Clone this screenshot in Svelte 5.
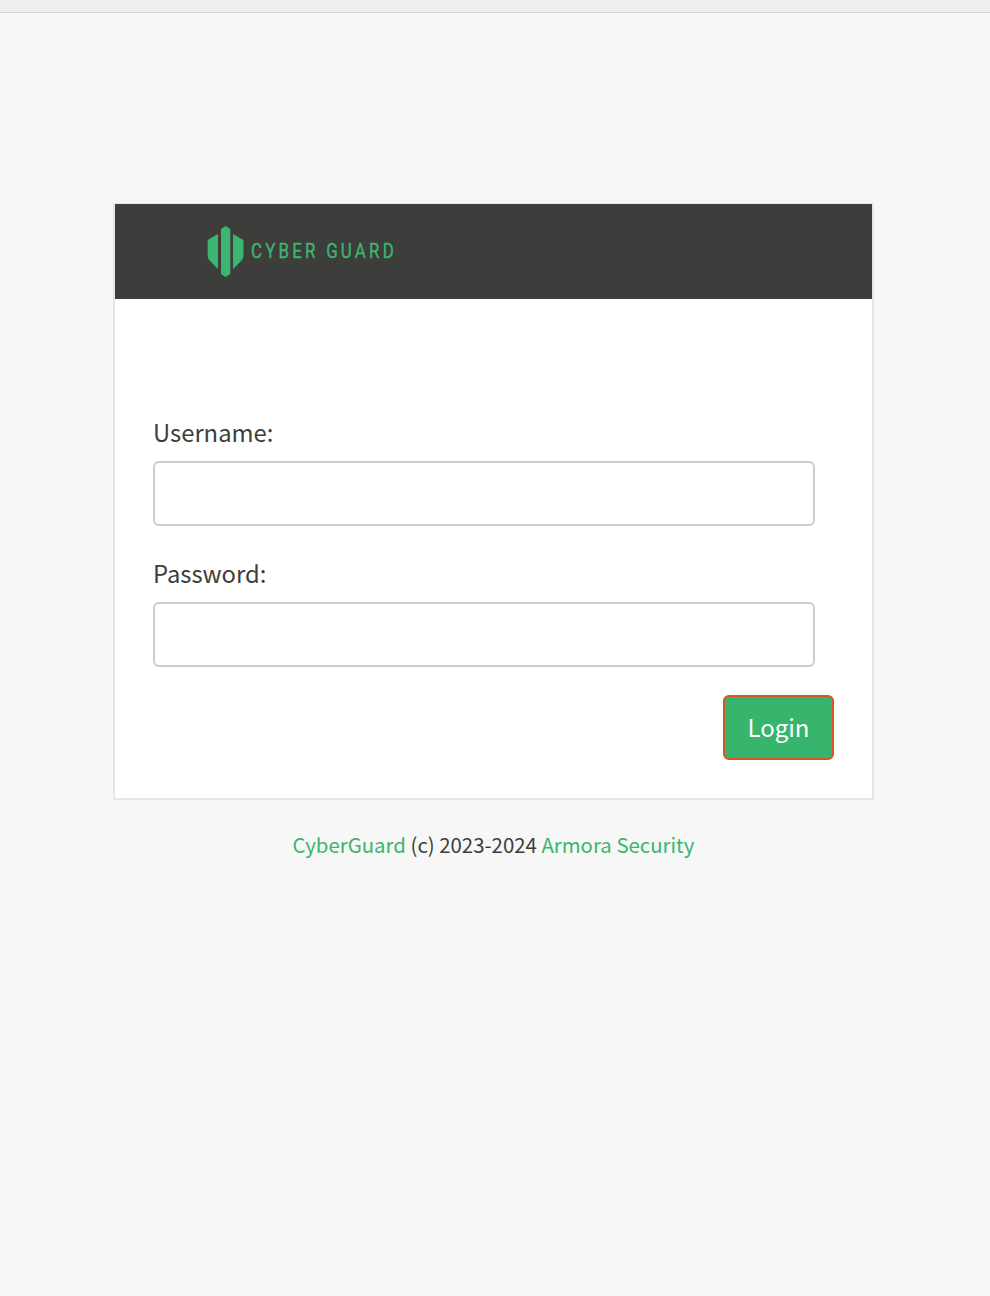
<script>
  let username = $state('')
  let password = $state('')
</script>

<div class="page">
  <div class="topbar"></div>
  <main class="wrap">
    <div class="card">
      <header class="head">
        <svg class="logo" width="280" height="54" viewBox="0 0 280 54" aria-label="Cyber Guard logo">
          <path d="M14 3 L17.700 0.500 Q18.500 0 19.400 0.500 L23.300 3 V48 L19.400 50.500 Q18.500 51 17.700 50.500 L14 48 Z" fill="#3cb56e" />
          <path d="M0.700 14 L11 8 V43 L4 36 Q0.700 33 0.700 30 Z" fill="#3cb56e" />
          <path d="M36.500 14 L26 8 V43 L33.200 36 Q36.500 33 36.500 30 Z" fill="#3cb56e" />
          <text class="logo-text" x="44" y="32" textLength="146" lengthAdjust="spacingAndGlyphs">CYBER GUARD</text>
        </svg>
      </header>
      <form class="form" onsubmit={(e) => e.preventDefault()}>
        <label class="field">
          <span>Username:</span>
          <input type="text" bind:value={username} />
        </label>
        <label class="field">
          <span>Password:</span>
          <input type="password" bind:value={password} />
        </label>
        <div class="actions">
          <button type="submit">Login</button>
        </div>
      </form>
    </div>
    <p class="foot">
      <a href="#cyberguard">CyberGuard</a> (c) 2023-2024 <a href="#armora">Armora Security</a>
    </p>
  </main>
</div>

<style>
  :global(body) {
    margin: 0;
    background: #f7f7f7;
  }
  .page {
    min-height: 1296px;
    box-sizing: border-box;
    border-left: 1px solid #fbfbfb;
    font-family: "Noto Sans CJK SC", "Noto Sans", sans-serif;
    color: #3d3d3b;
    font-size: 23.800px;
    line-height: 32px;
  }
  .topbar {
    height: 12px;
    margin-left: -1px;
    background: #eeeeee;
    border-bottom: 1px solid #d6d6d6;
  }
  .wrap {
    width: 761px;
    margin-left: 112px;
    padding-top: 190px;
  }
  .card {
    height: 597px;
    box-sizing: border-box;
    background: #fff;
    border: 2px solid #e6e6e6;
    border-top-width: 1px;
    display: flex;
    flex-direction: column;
  }
  .head {
    height: 95px;
    background: #3d3d3b;
    padding: 22px 0 0 92px;
    box-sizing: border-box;
  }
  .logo {
    display: block;
  }
  .logo-text {
    font-family: Roboto, "Liberation Sans", sans-serif;
    font-size: 21px;
    letter-spacing: 4px;
    fill: #3cb56e;
    stroke: #3cb56e;
    stroke-width: 0.4px;
  }
  .form {
    padding: 117px 38px 0 38px;
  }
  .field {
    display: block;
    margin-bottom: 31px;
  }
  .field span {
    display: block;
    margin-bottom: 13px;
    height: 32px;
  }
  input {
    display: block;
    width: 662px;
    height: 65px;
    box-sizing: border-box;
    border: 2px solid #cccccc;
    border-radius: 6px;
    background: #fff;
    outline: none;
    font: inherit;
    padding: 0 12px;
  }
  .actions {
    display: flex;
    justify-content: flex-end;
    margin-top: -3px;
  }
  button {
    width: 111px;
    height: 65px;
    box-sizing: border-box;
    background: #38b56c;
    border: 2px solid #d9541e;
    border-radius: 6px;
    color: #fff;
    font: inherit;
    font-size: 24px;
    padding: 0 0 2px;
  }
  .foot {
    margin: 28px 0 0;
    text-align: center;
    font-size: 20.400px;
  }
  .foot a {
    color: #3cb56e;
    text-decoration: none;
  }
</style>
